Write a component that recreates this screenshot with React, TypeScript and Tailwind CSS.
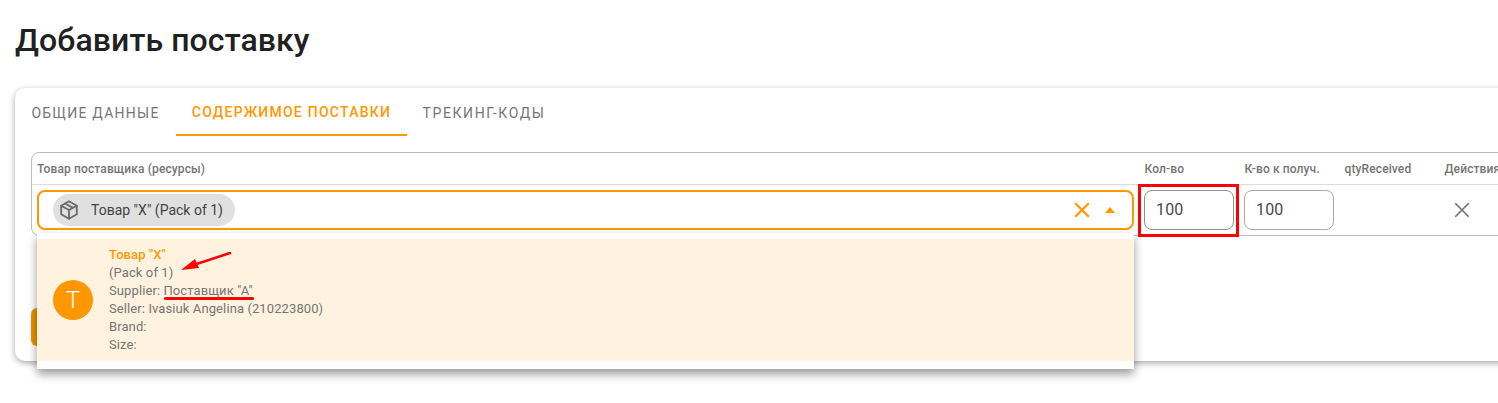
import React from "react";

const font = { fontFamily: "Roboto, sans-serif" };

function Box() {
  return (
    <svg width="22" height="22" viewBox="0 0 24 24" fill="none" stroke="#6b6b6b" strokeWidth="2" strokeLinejoin="round" strokeLinecap="round">
      <path d="M12 2.500l8.500 4.800v9.400L12 21.500l-8.500-4.800V7.300z" />
      <path d="M3.500 7.300L12 12l8.500-4.700M12 12v9.500M7.700 4.900l8.600 4.800" />
    </svg>
  );
}

function Cross({ color, size, width }: { color: string; size: number; width: number }) {
  return (
    <svg width={size} height={size} viewBox="0 0 16 16" fill="none" stroke={color} strokeWidth={width}>
      <path d="M2 2l12 12M14 2L2 14" />
    </svg>
  );
}

function Qty({ dark }: { dark?: boolean }) {
  return (
    <div className={`w-[90px] h-10 rounded-lg border flex items-center pl-[11px] text-base tracking-[0.15px] text-[#4a4a4a] ${dark ? "border-[#8f8f8f]" : "border-[#a8a8a8]"}`}>
      100
    </div>
  );
}

export default function App() {
  return (
    <div className="w-[1498px] h-[403px] overflow-hidden bg-white text-[#212121]" style={font}>
      <div className="pl-[15px]">
        <h1 className="h-[88px] pt-[19px] text-[32px] leading-[42px] font-medium tracking-[0.1px] text-[#212121]">Добавить поставку</h1>
        <div className="relative w-[1600px] h-[273px] rounded-[10px] bg-white shadow-[0_2px_6px_rgba(0,0,0,0.35)]">
          <div className="flex h-12">
            <div className="w-[161px] h-12 pt-[1px] flex items-center justify-center text-sm tracking-[1.25px] text-[#757575]">ОБЩИЕ ДАННЫЕ</div>
            <div className="w-[231px] h-12 pt-[1px] flex items-center justify-center text-sm font-medium tracking-[1.25px] text-[#ff9800] border-b-2 border-[#ff9800]">СОДЕРЖИМОЕ ПОСТАВКИ</div>
            <div className="w-[154px] h-12 pt-[1px] flex items-center justify-center text-sm tracking-[1.6px] text-[#757575]">ТРЕКИНГ-КОДЫ</div>
          </div>

          <div className="ml-4 mt-4 h-[84px] border border-[#bdbdbd] rounded-[8px]">
            <div className="flex h-[32px] pt-[1px] items-center border-b border-[#dcdcdc] text-xs font-medium tracking-[0.12px] text-[#757575]">
              <div className="w-[1112.500px] pl-[5px]">Товар поставщика (ресурсы)</div>
              <div className="w-[100px]">Кол-во</div>
              <div className="w-[100px]">К-во к получ.</div>
              <div className="w-[100px]">qtyReceived</div>
              <div className="w-[100px]">Действия</div>
            </div>
            <div className="flex h-[50px] items-center">
              <div className="w-[1112px] pl-[5px] shrink-0">
                <div className="w-[1097px] h-10 rounded-lg border-2 border-[#ff9800] flex items-center pl-[14px] pr-[14px]">
                  <div className="h-8 w-[182px] rounded-full bg-[#e0e0e0] flex items-center pl-[5px]">
                    <Box />
                    <span className="ml-[11px] text-sm text-[#424242]">Товар "X" (Pack of 1)</span>
                  </div>
                  <div className="flex-1" />
                  <Cross color="#ff9800" size={18} width={2} />
                  <svg className="ml-[14px]" width="10" height="6" viewBox="0 0 10 6"><path d="M0 6l5-6 5 6z" fill="#ff9800" /></svg>
                  <span className="w-[3px]" />
                </div>
              </div>
              <div className="w-[100px] shrink-0"><Qty dark /></div>
              <div className="w-[100px] shrink-0"><Qty /></div>
              <div className="w-[100px] shrink-0" />
              <div className="w-[100px] shrink-0 pl-[9px]"><Cross color="#757575" size={18} width={1.5} /></div>
            </div>
          </div>

          <div className="ml-4 mt-[72px] w-[60px] h-[38px] rounded-md bg-[#f09000]" />

          {/* Open dropdown */}
          <div className="absolute left-[22px] top-[145px] w-[1097px] h-[136px] pt-[6px] bg-white shadow-[0_5px_9px_rgba(0,0,0,0.4)]">
            <div className="h-[122px] bg-[#fff3e0] flex items-center pl-4">
              <div className="w-10 h-10 rounded-full bg-[#ff9800] text-white text-[24px] font-light flex items-center justify-center">T</div>
              <div className="ml-4 text-[13px] leading-[18px] tracking-[0.1px] text-[#757575]">
                <div className="font-medium text-[#ff9800]">Товар "X"</div>
                <div>(Pack of 1)</div>
                <div>Supplier: Поставщик "А"</div>
                <div>Seller: Ivasiuk Angelina (210223800)</div>
                <div>Brand:</div>
                <div>Size:</div>
              </div>
            </div>
          </div>

          {/* Red annotations */}
          <div className="absolute left-[1123px] top-[96px] w-[101px] h-[53px] border-[3px] border-[#ff0000]" />
          <div className="absolute left-[149px] top-[209px] w-[90px] h-[2.500px] rounded-full bg-[#ff0000]" />
          <svg className="absolute left-[165px] top-[163px]" width="52" height="22" viewBox="0 0 52 22">
            <path d="M50 2L12 14.500" stroke="#ff0000" strokeWidth="2.500" strokeLinecap="round" />
            <path d="M1 19l14-11 4 9z" fill="#ff0000" />
          </svg>
        </div>
      </div>
    </div>
  );
}
